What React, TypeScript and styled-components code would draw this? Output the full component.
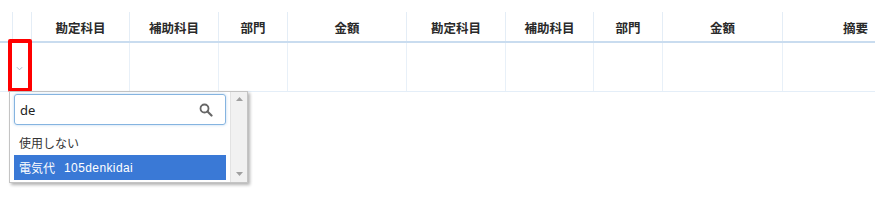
import styled, { createGlobalStyle } from 'styled-components';

const GlobalStyle = createGlobalStyle`
  html, body {
    margin: 0;
    padding: 0;
    background: #ffffff;
    font-family: "Noto Sans CJK JP", "Noto Sans", sans-serif;
  }
`;

const columns = [12, 19, 98, 89, 69, 119, 99, 88, 69, 120, 130];
const headers = ['', '', '勘定科目', '補助科目', '部門', '金額', '勘定科目', '補助科目', '部門', '金額', '摘要'];

export default function App() {
  return (
    <>
      <GlobalStyle />
      <Page>
        <Table>
          <HeaderRow>
            {headers.map((h, i) => (
              <HeadCell key={i} $w={columns[i]} $first={i === 0} $right={i === 10}>
                {h}
              </HeadCell>
            ))}
          </HeaderRow>
          <BodyRow>
            <BodyCell $w={columns[0] + columns[1]} $first>
              <Chevron viewBox="0 0 8 5">
                <path d="M1 1 L4 4 L7 1" fill="none" stroke="#9fb3c8" strokeWidth="1" />
              </Chevron>
            </BodyCell>
            {columns.slice(2).map((w, i) => (
              <BodyCell key={i} $w={w} />
            ))}
          </BodyRow>
        </Table>

        <Highlight />

        <Dropdown>
          <ListArea>
            <SearchBox>
              <SearchText>de</SearchText>
              <svg width="14" height="14" viewBox="0 0 14 14">
                <circle cx="5.5" cy="5.5" r="4" fill="none" stroke="#666" strokeWidth="1.8" />
                <path d="M8.5 8.5 L12.5 12.5" stroke="#666" strokeWidth="2.2" strokeLinecap="round" />
              </svg>
            </SearchBox>
            <Options>
              <Option>使用しない</Option>
              <Option $selected>
                電気代<Code>105denkidai</Code>
              </Option>
            </Options>
          </ListArea>
          <Scrollbar>
            <Arrow viewBox="0 0 7 4">
              <path d="M0 4 L3.5 0 L7 4 Z" fill="#a0a0a0" />
            </Arrow>
            <Arrow viewBox="0 0 7 4">
              <path d="M0 0 L3.5 4 L7 0 Z" fill="#a0a0a0" />
            </Arrow>
          </Scrollbar>
        </Dropdown>
      </Page>
    </>
  );
}

const Page = styled.div`
  position: relative;
  width: 875px;
  height: 202px;
  overflow: hidden;
  padding-top: 12px;
  box-sizing: border-box;
`;

const Table = styled.div`
  display: flex;
  flex-direction: column;
  width: max-content;
`;

const HeaderRow = styled.div`
  display: flex;
  height: 29px;
  border-bottom: 2px solid #c9dcef;
`;

const HeadCell = styled.div<{ $w: number; $first?: boolean; $right?: boolean }>`
  width: ${({ $w }) => $w}px;
  box-sizing: border-box;
  border-left: ${({ $first }) => ($first ? 'none' : '1px solid #e4edf6')};
  display: flex;
  align-items: center;
  justify-content: ${({ $right }) => ($right ? 'flex-end' : 'center')};
  padding-right: ${({ $right }) => ($right ? '44px' : '0')};
  font-size: 12.5px;
  font-weight: 700;
  color: #2a2a2a;
  padding-top: 1px;
`;

const BodyRow = styled.div`
  display: flex;
  height: 48px;
  border-bottom: 1px solid #e4eef8;
`;

const BodyCell = styled.div<{ $w: number; $first?: boolean }>`
  width: ${({ $w }) => $w}px;
  box-sizing: border-box;
  border-left: ${({ $first }) => ($first ? 'none' : '1px solid #e8f0f8')};
  display: flex;
  align-items: center;
  justify-content: center;
  padding-left: 8px;
`;

const Chevron = styled.svg`
  width: 7px;
  height: 5px;
  margin-top: 2px;
`;

const Highlight = styled.div`
  position: absolute;
  left: 8px;
  top: 39px;
  width: 24px;
  height: 53px;
  box-sizing: border-box;
  border: 4px solid #ff0000;
  border-radius: 2px;
`;

const Dropdown = styled.div`
  position: absolute;
  left: 9px;
  top: 91px;
  width: 239px;
  height: 92px;
  box-sizing: border-box;
  background: #ffffff;
  border: 1px solid #c4c4c4;
  box-shadow: 2px 2px 3px rgba(0, 0, 0, 0.3);
  display: flex;
`;

const ListArea = styled.div`
  flex: 1;
  padding: 2px 4px 0 4px;
  display: flex;
  flex-direction: column;
`;

const SearchBox = styled.div`
  height: 31px;
  box-sizing: border-box;
  border: 1px solid #85b4e0;
  border-radius: 3px;
  box-shadow: 0 0 3px rgba(102, 160, 220, 0.45);
  display: flex;
  align-items: center;
  justify-content: space-between;
  padding: 0 12px 0 5px;
`;

const SearchText = styled.span`
  font-family: "Noto Sans", "Noto Sans CJK JP", sans-serif;
  font-size: 13px;
  color: #222;
`;

const Options = styled.div`
  margin-top: 5px;
  display: flex;
  flex-direction: column;
`;

const Option = styled.div<{ $selected?: boolean }>`
  height: 25px;
  display: flex;
  align-items: center;
  padding-left: 5px;
  font-size: 12px;
  color: ${({ $selected }) => ($selected ? '#ffffff' : '#333')};
  background: ${({ $selected }) => ($selected ? '#3a79d6' : 'transparent')};
`;

const Code = styled.span`
  margin-left: 9px;
  font-family: "Liberation Sans", "Noto Sans", sans-serif;
  font-size: 12px;
  letter-spacing: 0.4px;
`;

const Scrollbar = styled.div`
  width: 16px;
  background: #f1f1f1;
  border-left: 1px solid #e2e2e2;
  display: flex;
  flex-direction: column;
  justify-content: space-between;
  align-items: center;
  padding: 5px 0 6px;
`;

const Arrow = styled.svg`
  width: 7px;
  height: 4px;
`;
